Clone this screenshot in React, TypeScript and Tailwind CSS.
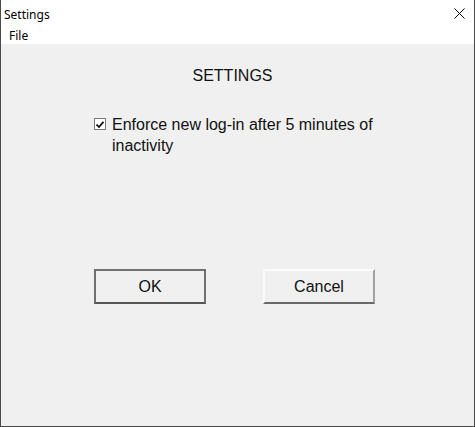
import { useState } from "react";

const App = () => {
  const [enforce, setEnforce] = useState(true);

  return (
    <div className="w-[475px] h-[427px] flex flex-col bg-[#f0f0f0] border-x border-b border-[#4a4a4a] overflow-hidden">
      {/* title bar */}
      <div className="h-[29px] bg-white flex items-center justify-between pl-[3px] pr-[9px]">
        <span className="text-[12px] text-black" style={{ fontFamily: '"Noto Sans", "Open Sans", sans-serif' }}>
          Settings
        </span>
        <svg width="11" height="11" viewBox="0 0 11 11" className="mb-[3px]">
          <path d="M0.5 0.5 L10.5 10.5 M10.5 0.5 L0.5 10.5" stroke="#000" strokeWidth="1" />
        </svg>
      </div>

      {/* menu bar */}
      <div className="h-[15px] bg-white flex items-center pl-[8px]">
        <span className="text-[12px] text-black leading-none -mt-[2px]" style={{ fontFamily: '"Noto Sans", "Open Sans", sans-serif' }}>
          File
        </span>
      </div>

      <div className="flex-1 flex flex-col font-['Liberation_Sans',Arial,sans-serif] text-[#111]">
        <h1 className="mt-[22px] text-center text-[16px] leading-[19px] pr-[10px]">SETTINGS</h1>

        <label className="mt-[29px] ml-[93px] flex items-start gap-[6px] w-[285px] cursor-default">
          <span
            onClick={() => setEnforce(!enforce)}
            className="mt-[4px] w-[12px] h-[12px] shrink-0 bg-white border border-[#7a7a7a] flex items-center justify-center"
          >
            {enforce && (
              <svg width="8" height="7" viewBox="0 0 8 7">
                <path d="M0.5 3.5 L3 6 L7.5 0.8" fill="none" stroke="#000" strokeWidth="1.6" />
              </svg>
            )}
          </span>
          <span className="text-[16px] leading-[21px]">Enforce new log-in after 5 minutes of inactivity</span>
        </label>

        <div className="mt-[113px] ml-[93px] flex gap-[57px]">
          <button className="w-[112px] h-[35px] bg-[#f0f0f0] border-2 border-[#707070] border-b-[#555] text-[16px]">
            OK
          </button>
          <button className="w-[112px] h-[35px] bg-[#f0f0f0] border-2 border-t-[#fbfbfb] border-l-[#fbfbfb] border-r-[#a0a0a0] border-b-[#696969] text-[16px]">
            Cancel
          </button>
        </div>
      </div>
    </div>
  );
};

export default App;
